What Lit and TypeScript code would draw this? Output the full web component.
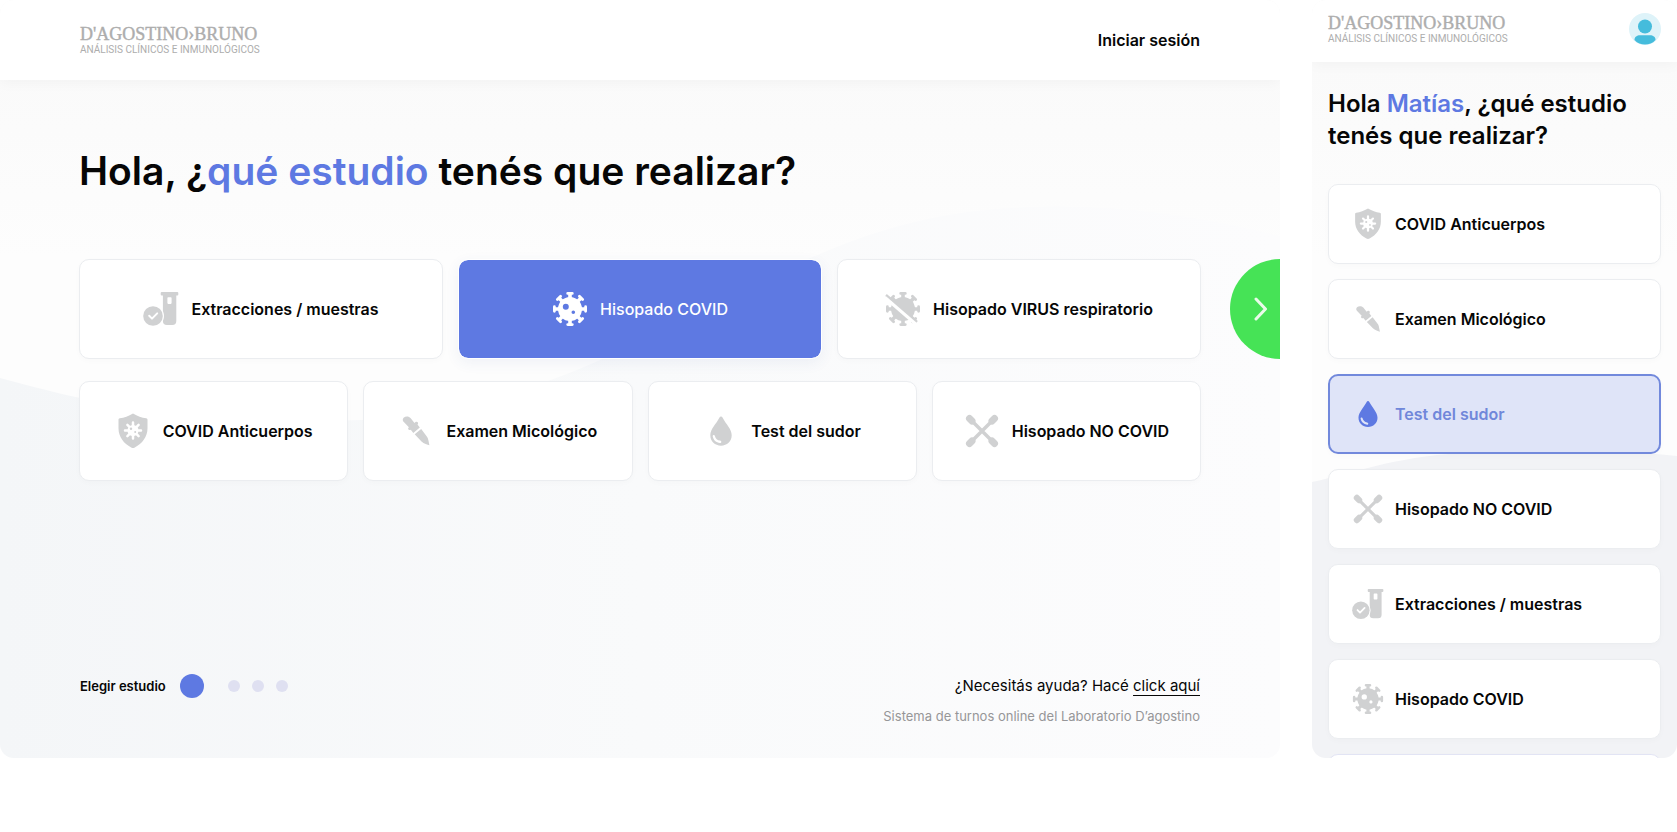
import { LitElement, html, svg, css } from "lit";
import { customElement, property, state } from "lit/decorators.js";
import { classMap } from "lit/directives/class-map.js";

type IconName = "tube" | "virus" | "virus-off" | "shield" | "dropper" | "drop" | "swabs";

interface Study {
  id: string;
  label: string;
  icon: IconName;
}

const STUDIES: Record<string, Study> = {
  extracciones: { id: "extracciones", label: "Extracciones / muestras", icon: "tube" },
  covid: { id: "covid", label: "Hisopado COVID", icon: "virus" },
  respiratorio: { id: "respiratorio", label: "Hisopado VIRUS respiratorio", icon: "virus-off" },
  anticuerpos: { id: "anticuerpos", label: "COVID Anticuerpos", icon: "shield" },
  micologico: { id: "micologico", label: "Examen Micológico", icon: "dropper" },
  sudor: { id: "sudor", label: "Test del sudor", icon: "drop" },
  nocovid: { id: "nocovid", label: "Hisopado NO COVID", icon: "swabs" },
};

const FEATURED = ["extracciones", "covid", "respiratorio"];
const SECONDARY = ["anticuerpos", "micologico", "sudor", "nocovid"];
const MOBILE = ["anticuerpos", "micologico", "sudor", "nocovid", "extracciones", "covid"];

const spikes = [0, 45, 90, 135, 180, 225, 270, 315].map(
  (a) => svg`<path transform="rotate(${a} 18 18)" d="M15.7 1h4.600a1.400 1.400 0 0 1 0 2.800h-.5V8h-3.600V3.800h-.5a1.400 1.400 0 0 1 0-2.800z"/>`
);

const GLYPHS = {
  virus: svg`${spikes}<path fill-rule="evenodd" d="M18 6a12 12 0 1 0 0 24a12 12 0 0 0 0-24zM13.800 12.700a3 3 0 1 1 0 6a3 3 0 0 1 0-6zM21.300 19.500a1.800 1.800 0 1 1 0 3.600a1.800 1.800 0 0 1 0-3.600z"/>`,
  "virus-off": svg`${spikes}<circle cx="18" cy="18" r="12"/><path d="M1 4l31 27" stroke="currentColor" stroke-width="2.500"/><path class="gap" d="M0 6.500L33 35" stroke-width="3"/>`,
  tube: svg`<path fill-rule="evenodd" d="M18.700 1h15.600a1 1 0 0 1 1 1v1.400a1 1 0 0 1-1 1h-1V30a4 4 0 0 1-4 4h-5.400a4 4 0 0 1-4-4V4.400h-1.200a1 1 0 0 1-1-1V2a1 1 0 0 1 1-1zM25.200 6.300h2.600a.8.8 0 0 1 .8.8v5a.8.8 0 0 1-.8.8h-2.600a.8.8 0 0 1-.8-.8v-5a.8.8 0 0 1 .8-.8z"/><circle class="gap" cx="10" cy="25" r="10" stroke-width="2"/><circle cx="10" cy="25" r="9.800"/><path class="gap line" d="M6.200 24.800l2.800 2.800 5.200-5.200" stroke-width="2"/>`,
  shield: svg`<path d="M18 .5c4.500 2.700 8.800 4.200 13.200 4.800.9.100 1.300.7 1.300 1.500v8.500c0 8.700-5.200 15.200-12.700 19.100-1.200.7-2.400.7-3.600 0C8.700 30.500 3.500 24 3.500 15.300V6.800c0-.8.400-1.400 1.300-1.500C9.200 4.700 13.500 3.200 18 .5z"/><path class="gap line" stroke-width="2.500" d="M18 9.500v16M10 17.500h16M12.400 11.900l11.200 11.200M23.600 11.900L12.400 23.100"/><circle class="gap-fill" cx="18" cy="17.500" r="5.500"/><circle cx="16" cy="15.700" r="1.200"/><circle cx="20.200" cy="19" r="1"/>`,
  dropper: svg`<path d="M5.600 4.800c2-1.700 5.200-1.700 7.100.4l3.800 4.700 1-.8c.8-.6 1.600-.5 2.200.2.600.8.500 1.600-.2 2.300l2.300 3-6.500 5.300-2.500-3.100c-.9.500-1.700.4-2.300-.3-.6-.8-.4-1.600.4-2.200l-4.600-4.700C4.700 8.300 4.100 6.500 5.600 4.800z"/><path d="M16.700 21.300l6.500-5.300 5.600 7.400c1 1.300 1.400 2.600 1.700 4.400l.9 4.500c-1.700-.5-5.700-1.500-7.900-3.800z"/>`,
  drop: svg`<path fill-rule="evenodd" d="M18 3.500c.7 0 1.200.4 1.500 1C22.800 11 28.700 16 28.700 22.300c0 6-4.700 10.400-10.700 10.400S7.300 28.300 7.300 22.300C7.300 16 13.200 11 16.500 4.500c.3-.6.8-1 1.500-1zM10.800 22c-.7 0-1.200.6-1.100 1.300.6 3.800 3.500 6.300 7.300 6.700.7.100 1.300-.4 1.300-1.100s-.5-1.200-1.200-1.300c-2.700-.4-4.700-2-5.200-4.700-.1-.6-.5-.9-1.100-.9z"/>`,
  swabs: svg`<path class="line" d="M6 6l24 24M30 6L6 30" stroke="currentColor" stroke-width="3.500"/><path class="line" d="M5.500 5.500l2.500 2.500M30.500 5.500L28 8M5.500 30.500L8 28M30.500 30.500L28 28" stroke="currentColor" stroke-width="7"/>`,
};

@customElement("study-icon")
class StudyIcon extends LitElement {
  @property() name: IconName = "virus";

  static styles = css`
    :host {
      display: block;
    }
    svg {
      display: block;
      width: 100%;
      height: 100%;
      fill: currentColor;
      overflow: visible;
    }
    .gap {
      fill: none;
      stroke: #fff;
    }
    .gap-fill {
      fill: #fff;
    }
    .line {
      fill: none;
      stroke-linecap: round;
      stroke-linejoin: round;
    }
  `;

  render() {
    return html`<svg viewBox="0 0 36 36" aria-hidden="true">${GLYPHS[this.name]}</svg>`;
  }
}

@customElement("brand-logo")
class BrandLogo extends LitElement {
  static styles = css`
    :host {
      display: block;
    }
    a {
      display: block;
      color: #adadad;
      text-decoration: none;
      white-space: nowrap;
    }
    .name {
      display: block;
      font: 400 18px/19px "Liberation Serif", serif;
      -webkit-text-stroke: 0.4px currentColor;
    }
    .tag {
      display: block;
      font: 400 10px/12px Roboto, sans-serif;
    }
  `;

  render() {
    return html`<a href="#">
      <span class="name">D'AGOSTINO›BRUNO</span>
      <span class="tag">ANÁLISIS CLÍNICOS E INMUNOLÓGICOS</span>
    </a>`;
  }
}

@customElement("app-root")
class AppRoot extends LitElement {
  @state() private desktopChoice = "covid";
  @state() private mobileChoice = "sudor";

  static styles = css`
    :host {
      display: block;
      background: #fff;
      color: #060606;
      font-family: Inter, sans-serif;
      --blue: #5e79e2;
      --icon: #d0d1d2;
    }
    * {
      box-sizing: border-box;
    }
    h1,
    p,
    ol {
      margin: 0;
      padding: 0;
    }
    button {
      font: inherit;
      color: inherit;
      cursor: pointer;
    }
    .screens {
      display: grid;
      grid-template-columns: minmax(0, 1280fr) minmax(0, 365fr);
      gap: 32px;
      height: 100vh;
      padding-bottom: 74px;
    }
    .panel {
      display: grid;
      grid-template: minmax(0, 1fr) / minmax(0, 1fr);
      overflow: hidden;
      border-radius: 14px;
      background: linear-gradient(#f9f9f9, #fdfdfd 260px);
    }
    .waves,
    .screen {
      grid-area: 1 / 1;
    }
    .waves {
      width: 100%;
      height: 100%;
    }
    .screen {
      display: flex;
      flex-direction: column;
      min-height: 0;
      z-index: 1;
    }
    .bar {
      display: flex;
      flex: none;
      align-items: center;
      justify-content: space-between;
      background: #fff;
      box-shadow: 0 2px 14px rgba(0, 0, 0, 0.04);
    }
    .accent {
      color: var(--blue);
    }

    .desktop .bar {
      height: 80px;
      padding: 0 80px;
    }
    .session {
      color: inherit;
      font-size: 16px;
      font-weight: 600;
      text-decoration: none;
    }
    .desktop .content {
      display: flex;
      flex: 1;
      flex-direction: column;
      padding: 64px 79px 32px;
    }
    .desktop h1 {
      font-size: 39px;
      font-weight: 600;
      line-height: 54px;
      margin-bottom: 61px;
    }
    .row {
      display: grid;
      gap: 15px;
    }
    .featured {
      grid-template-columns: repeat(3, minmax(0, 1fr));
      margin-bottom: 22px;
    }
    .secondary {
      grid-template-columns: repeat(4, minmax(0, 1fr));
    }
    .strip {
      display: grid;
      position: relative;
    }
    .next {
      position: absolute;
      top: 0;
      right: -129px;
      width: 100px;
      height: 100px;
      padding: 0 0 0 24px;
      border: 0;
      border-radius: 50%;
      background: #46e356;
    }
    .next svg {
      display: block;
      width: 14px;
      height: 24px;
    }
    .card {
      display: flex;
      align-items: center;
      gap: 12px;
      border: 1px solid #ebedf0;
      border-radius: 10px;
      background: #fff;
      box-shadow: 0 2px 6px rgba(20, 30, 60, 0.02);
      font-size: 16px;
      font-weight: 600;
      white-space: nowrap;
    }
    .card study-icon {
      flex: none;
      width: 36px;
      height: 36px;
      color: var(--icon);
    }
    .desktop .card {
      height: 100px;
      justify-content: center;
      padding: 0;
    }
    .desktop .card.on {
      border-color: #fff;
      background: var(--blue) padding-box;
      color: #fff;
      font-weight: 500;
      box-shadow: 0 4px 14px rgba(60, 80, 160, 0.07);
    }
    .desktop .card.on study-icon {
      color: #fff;
    }
    .foot {
      display: flex;
      align-items: flex-start;
      justify-content: space-between;
      margin-top: auto;
    }
    .steps {
      display: flex;
      align-items: center;
      list-style: none;
      gap: 12px;
      height: 24px;
      font-size: 13px;
      font-weight: 600;
      padding-left: 1px;
    }
    .steps li {
      display: flex;
      align-items: center;
      gap: 14px;
    }
    .dot {
      width: 12px;
      height: 12px;
      border-radius: 50%;
      background: #dfe0f1;
    }
    .dot.now {
      width: 24px;
      height: 24px;
      margin-right: 12px;
      background: var(--blue);
    }
    .help {
      text-align: right;
      font-size: 15px;
      line-height: 24px;
      padding-right: 1px;
    }
    .help a {
      color: inherit;
      text-underline-offset: 4px;
    }
    .note {
      color: #969698;
      font-size: 13px;
      line-height: 20px;
      margin-top: 8px;
    }

    .mobile .bar {
      height: 62px;
      padding: 0 16px 4px;
    }
    .user {
      width: 32px;
      height: 32px;
      padding: 0;
      border: 0;
      border-radius: 50%;
      background: #def3f9;
    }
    .user svg {
      display: block;
      width: 32px;
      height: 32px;
    }
    .mobile .content {
      flex: 1;
      min-height: 0;
      overflow: hidden;
      padding: 26px 16px 0;
    }
    .mobile h1 {
      font-size: 24px;
      font-weight: 600;
      line-height: 32px;
      margin-bottom: 32px;
      white-space: nowrap;
    }
    .list {
      display: grid;
      gap: 15px;
    }
    .mobile .card {
      height: 80px;
      gap: 11px;
      padding: 0 23px;
    }
    .mobile .card study-icon {
      width: 32px;
      height: 32px;
    }
    .mobile .card.on {
      border: 2px solid #7289dc;
      padding: 0 22px;
      background: #dfe4f8;
      color: #7087da;
    }
    .mobile .card.on study-icon {
      color: var(--blue);
    }
    .mobile .card.more {
      border-color: #e2e4f4;
    }
  `;

  private card(id: string, chosen: string, pick: (id: string) => void) {
    const study = STUDIES[id];
    const on = id === chosen;
    return html`<button
      type="button"
      class=${classMap({ card: true, on })}
      aria-pressed=${on ? "true" : "false"}
      @click=${() => pick(id)}
    >
      <study-icon name=${study.icon}></study-icon>
      <span>${study.label}</span>
    </button>`;
  }

  private desktop() {
    const pick = (id: string) => (this.desktopChoice = id);
    return html`<section class="panel desktop">
      <svg class="waves" viewBox="0 0 1280 758" preserveAspectRatio="none" aria-hidden="true">
        <defs>
          <linearGradient id="wave-a" x1="0" x2="1" y1="0" y2="0">
            <stop offset="0" stop-color="#f4f6f8" />
            <stop offset="0.5" stop-color="#f9fafb" />
            <stop offset="1" stop-color="#fcfcfd" />
          </linearGradient>
        </defs>
        <path
          fill="url(#wave-a)"
          d="M0 378C60 394 120 410 200 415S330 424 400 417C520 402 600 362 700 312C800 262 880 216 1010 208C1110 202 1200 216 1280 236V758H0Z"
        />
      </svg>
      <div class="screen">
        <header class="bar">
          <brand-logo></brand-logo>
          <a class="session" href="#">Iniciar sesión</a>
        </header>
        <main class="content">
          <h1>Hola, ¿<span class="accent">qué estudio</span> tenés que realizar?</h1>
          <div class="strip">
            <div class="row featured">${FEATURED.map((id) => this.card(id, this.desktopChoice, pick))}</div>
            <button type="button" class="next" aria-label="Siguiente">
              <svg viewBox="0 0 14 24" fill="none" stroke="#eafbea" stroke-width="3" stroke-linecap="round" stroke-linejoin="round">
                <path d="M2 2l9.500 10L2 22" />
              </svg>
            </button>
          </div>
          <div class="row secondary">${SECONDARY.map((id) => this.card(id, this.desktopChoice, pick))}</div>
          <footer class="foot">
            <ol class="steps">
              <li aria-current="step">Elegir estudio <span class="dot now"></span></li>
              <li><span class="dot"></span></li>
              <li><span class="dot"></span></li>
              <li><span class="dot"></span></li>
            </ol>
            <div class="help">
              <p>¿Necesitás ayuda? Hacé <a href="#">click aquí</a></p>
              <p class="note">Sistema de turnos online del Laboratorio D’agostino</p>
            </div>
          </footer>
        </main>
      </div>
    </section>`;
  }

  private mobile() {
    const pick = (id: string) => (this.mobileChoice = id);
    return html`<section class="panel mobile">
      <svg class="waves" viewBox="0 0 365 758" preserveAspectRatio="none" aria-hidden="true">
        <path fill="#f2f3f6" d="M0 482C40 474 80 457 150 453C230 446 300 450 365 456V758H0Z" />
      </svg>
      <div class="screen">
        <header class="bar">
          <brand-logo></brand-logo>
          <button type="button" class="user" aria-label="Mi cuenta">
            <svg viewBox="0 0 32 32" fill="#45bcdc" aria-hidden="true">
              <circle cx="16" cy="13.500" r="7" />
              <path d="M5.500 27C5.500 23.800 8 22.300 11 22.300h10c3 0 5.500 1.500 5.500 4.700C23.500 30.400 20 31.600 16 31.600S8.500 30.400 5.500 27z" />
            </svg>
          </button>
        </header>
        <main class="content">
          <h1>Hola <span class="accent">Matías</span>, ¿qué estudio<br />tenés que realizar?</h1>
          <div class="list">
            ${MOBILE.map((id) => this.card(id, this.mobileChoice, pick))}
            <button type="button" class="card more" aria-label="Ver más estudios"></button>
          </div>
        </main>
      </div>
    </section>`;
  }

  render() {
    return html`<div class="screens">${this.desktop()}${this.mobile()}</div>`;
  }
}
